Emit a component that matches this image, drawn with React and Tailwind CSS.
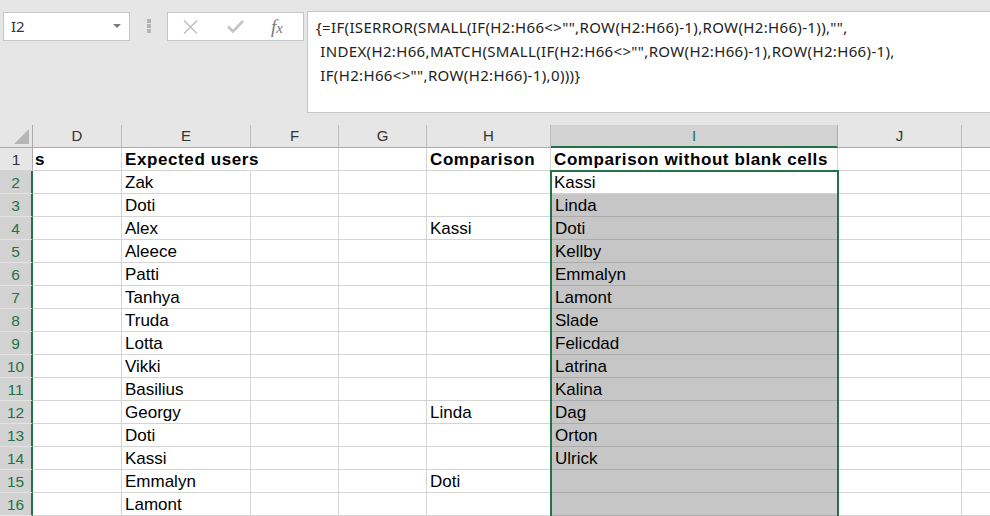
import React from "react";

const cols = [
  { k: "D", w: "w-[89px]" },
  { k: "E", w: "w-[129px]" },
  { k: "F", w: "w-[88px]" },
  { k: "G", w: "w-[88px]" },
  { k: "H", w: "w-[124px]" },
  { k: "I", w: "w-[287px]" },
  { k: "J", w: "w-[124px]" },
  { k: "K", w: "w-[60px]" },
];

const expected = ["Zak", "Doti", "Alex", "Aleece", "Patti", "Tanhya", "Truda", "Lotta", "Vikki", "Basilius", "Georgy", "Doti", "Kassi", "Emmalyn", "Lamont"];
const comparison = { 4: "Kassi", 12: "Linda", 15: "Doti" };
const noBlanks = ["Kassi", "Linda", "Doti", "Kellby", "Emmalyn", "Lamont", "Slade", "Felicdad", "Latrina", "Kalina", "Dag", "Orton", "Ulrick"];

function cellText(row, col) {
  if (row === 1) {
    if (col === "D") return "s";
    if (col === "E") return "Expected users";
    if (col === "H") return "Comparison";
    if (col === "I") return "Comparison without blank cells";
    return "";
  }
  if (col === "E") return expected[row - 2] || "";
  if (col === "H") return comparison[row] || "";
  if (col === "I") return noBlanks[row - 2] || "";
  return "";
}

const cellFont = { fontFamily: '"Liberation Sans", Arial, sans-serif' };

function TopBar() {
  return (
    <div className="flex items-start h-[125px] pt-[11px] bg-[#e6e6e6]">
      <div className="ml-[3px] mt-px w-[127px] h-[29px] bg-white border border-[#c6c6c6] flex items-center justify-between pl-[7px] pr-[8px]">
        <span className="text-[15px] text-[#333]" style={{ fontFamily: '"Noto Sans", sans-serif' }}>I2</span>
        <svg width="8" height="5" viewBox="0 0 8 5"><path d="M0 0h8L4 4z" fill="#7a7a7a" /></svg>
      </div>
      <div className="w-[37px] h-[30px] flex flex-col items-center justify-center gap-[1px]">
        <div className="w-[4px] h-[4px] bg-[#b4b4b4]" />
        <div className="w-[4px] h-[4px] bg-[#b4b4b4]" />
        <div className="w-[4px] h-[4px] bg-[#b4b4b4]" />
      </div>
      <div className="mt-px w-[137px] h-[29px] bg-white border border-[#c6c6c6] flex items-center">
        <svg className="ml-[15px]" width="15" height="14" viewBox="0 0 15 14">
          <path d="M1 0.5L14 13.5M14 0.5L1 13.5" stroke="#bdbdbd" strokeWidth="1.4" fill="none" />
        </svg>
        <svg className="ml-[29px]" width="17" height="13" viewBox="0 0 17 13">
          <path d="M1 6.5L6 11.5L16 1" stroke="#c4c4c4" strokeWidth="2.6" fill="none" />
        </svg>
        <span className="ml-[27px] text-[19px] italic text-[#7a7a7a] leading-none" style={{ fontFamily: '"Liberation Serif", "Times New Roman", serif' }}>
          f<span className="text-[15px]">x</span>
        </span>
      </div>
      <div className="ml-[3px] flex-1 h-[102px] bg-white border border-r-0 border-[#c6c6c6] pl-[8px] pt-[3px] text-[15px] tracking-[0.35px] leading-[24px] text-[#222] whitespace-pre" style={{ fontFamily: '"Noto Sans", "Open Sans", sans-serif' }}>
        <div>{'{=IF(ISERROR(SMALL(IF(H2:H66<>"",ROW(H2:H66)-1),ROW(H2:H66)-1)),"",'}</div>
        <div>{' INDEX(H2:H66,MATCH(SMALL(IF(H2:H66<>"",ROW(H2:H66)-1),ROW(H2:H66)-1),'}</div>
        <div>{' IF(H2:H66<>"",ROW(H2:H66)-1),0)))}'}</div>
      </div>
    </div>
  );
}

function HeaderRow() {
  return (
    <div className="flex h-[23px] bg-[#e6e6e6]" style={cellFont}>
      <div className="w-[33px] h-full border-r border-b border-[#ababab] relative shrink-0">
        <svg className="absolute right-[3px] bottom-[3px]" width="15" height="15" viewBox="0 0 15 15">
          <path d="M15 0V15H0z" fill="#b6b6b6" />
        </svg>
      </div>
      {cols.map((c) =>
        c.k === "I" ? (
          <div key={c.k} className={`${c.w} shrink-0 h-full bg-[#d2d2d2] border-r border-[#ababab] border-b-2 border-b-[#217346] flex items-center justify-center pt-px text-[15px] text-[#217346]`}>
            {c.k}
          </div>
        ) : (
          <div key={c.k} className={`${c.w} shrink-0 h-full border-r border-b border-r-[#bcbcbc] border-b-[#ababab] flex items-center justify-center pt-px text-[15px] text-[#333]`}>
            {c.k === "K" ? "" : c.k}
          </div>
        )
      )}
    </div>
  );
}

function Row({ n }) {
  const sel = n >= 2;
  return (
    <div className="flex h-[23px]" style={cellFont}>
      {sel ? (
        <div className="w-[33px] shrink-0 h-full bg-[#d2d2d2] border-r-2 border-r-[#217346] border-b border-b-[#e4e4e4] flex items-center justify-center pt-px text-[15.5px] text-[#217346]">
          {n}
        </div>
      ) : (
        <div className="w-[33px] shrink-0 h-full bg-[#e6e6e6] border-r border-b border-r-[#ababab] border-b-[#d4d4d4] flex items-center justify-center pt-px text-[15.5px] text-[#333]">
          {n}
        </div>
      )}
      {cols.map((c) => {
        const t = cellText(n, c.k);
        const bold = n === 1 ? "font-bold tracking-[0.6px]" : "";
        if (c.k === "I" && n >= 3) {
          return (
            <div key={c.k} className={`${c.w} shrink-0 h-full bg-[#c6c6c6] border-r border-b border-r-[#d4d4d4] border-b-[#ababab] flex items-center pl-[4px] pt-[2px] text-[17px] text-black whitespace-nowrap`}>
              {t}
            </div>
          );
        }
        const spill = n === 1 && c.k === "E";
        return (
          <div
            key={c.k}
            className={`${c.w} shrink-0 h-full border-r border-b border-b-[#d4d4d4] ${spill ? "border-r-transparent" : "border-r-[#d4d4d4]"} flex items-center ${c.k === "D" && n === 1 ? "pl-[2px]" : "pl-[3px]"} pt-[2px] text-[17px] text-black whitespace-nowrap ${bold}`}
          >
            {t}
          </div>
        );
      })}
    </div>
  );
}

export default function App() {
  const rows = Array.from({ length: 16 }, (_, i) => i + 1);
  return (
    <div className="w-[990px] h-[516px] overflow-hidden bg-[#e6e6e6]">
      <TopBar />
      <div className="relative bg-white">
        <HeaderRow />
        {rows.map((n) => (
          <Row key={n} n={n} />
        ))}
        <div className="absolute left-[550px] top-[45px] w-[289px] h-[400px] border-2 border-[#217346] pointer-events-none" />
      </div>
    </div>
  );
}
